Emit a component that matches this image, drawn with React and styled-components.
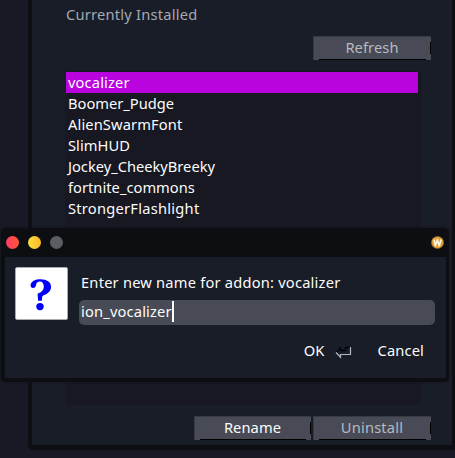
import React from "react";
import styled, { createGlobalStyle } from "styled-components";

const GlobalStyle = createGlobalStyle`
  * { box-sizing: border-box; }
  html, body { margin: 0; padding: 0; overflow: hidden; background: #171924; }
`;

const Desktop = styled.div`
  position: relative;
  width: 455px;
  height: 458px;
  padding-left: 28px;
  overflow: hidden;
  background: #171924;
  color: #fcfcfc;
  font: 14.67px/21px "Noto Sans", sans-serif;
  white-space: pre;
`;

const ManagerWindow = styled.main`
  display: flex;
  flex-direction: column;
  width: 429px;
  height: 450px;
  padding: 4px 21px 0 33px;
  background: #191d28;
  border: solid #0d0e12;
  border-width: 0 5px 5px 4px;
  border-radius: 0 0 5px 5px;
`;

const Heading = styled.h1`
  margin: 0 0 11px 1px;
  font-size: inherit;
  font-weight: 400;
  letter-spacing: 0.22px;
  color: #a5a9b3;
`;

const ButtonRow = styled.div`
  display: flex;
  justify-content: flex-end;
  gap: 2px;
`;

const PushButton = styled.button`
  position: relative;
  width: ${(p) => p.$width || 118}px;
  height: 24px;
  padding: 0 1px 3px 0;
  border: solid #373a43;
  border-width: 1px 0 0 1px;
  background: #484b55;
  color: ${(p) => (p.$muted ? "#b6b9c2" : "#fcfcfc")};
  font: inherit;
  line-height: 20px;
  letter-spacing: ${(p) => p.$tracking || 0}px;

  &::before {
    content: "";
    position: absolute;
    left: 5px;
    right: 5px;
    bottom: 0;
    height: 1px;
    background: #000;
  }
  &::after {
    content: "";
    position: absolute;
    right: 0;
    top: 5px;
    bottom: 6px;
    width: 1px;
    background: #000;
  }
`;

const AddonList = styled.ul`
  flex: none;
  width: 356px;
  height: 334px;
  margin: 11px 0;
  padding: 1px 3px 0 1px;
  list-style: none;
  border-radius: 3px;
  background: #171822;
`;

const AddonItem = styled.li`
  height: 21px;
  padding-left: 2px;
  line-height: 20px;
  letter-spacing: ${(p) => p.$tracking}px;
  background: ${(p) => (p.$selected ? "#b904e0" : "transparent")};
`;

const Dialog = styled.section`
  position: absolute;
  left: 1px;
  top: 228px;
  width: 448px;
  height: 154px;
  padding: 0 3px 4px 4px;
  border-radius: 5px;
  background: #0d0e12;
  box-shadow: 0 0 2px #101116;
`;

const TitleBar = styled.header`
  display: flex;
  align-items: center;
  gap: 9px;
  height: 29px;
  padding: 0 2px 0 1px;
`;

const WindowDot = styled.span`
  width: 13px;
  height: 13px;
  border-radius: 50%;
  background: ${(p) => p.$fill};
`;

const WineBadge = styled.svg`
  width: 13px;
  height: 13px;
  margin-left: auto;
`;

const DialogBody = styled.div`
  display: flex;
  gap: 11px;
  height: 121px;
  padding: 10px 10px 0;
  background: #191d28;
`;

const QuestionTile = styled.div`
  flex: none;
  width: 53px;
  height: 53px;
  border: 1px solid #a9abb0;
  border-radius: 2px;
  background: #fff;
`;

const Prompt = styled.div`
  flex: 1;
  min-width: 0;
`;

const PromptLabel = styled.label`
  display: block;
  height: 33px;
  padding: 5px 0 0 2px;
  letter-spacing: 0.21px;
`;

const NameField = styled.div`
  display: flex;
  align-items: flex-start;
  width: 356px;
  height: 25px;
  padding: 1px 2px 0;
  border-radius: 5px;
  background: #484b55;
  line-height: 20px;
  letter-spacing: 0.17px;
`;

const Caret = styled.span`
  width: 2px;
  height: 21px;
  background: #fff;
`;

const Actions = styled.footer`
  display: flex;
  align-items: center;
  justify-content: flex-end;
  height: 21px;
  margin: 15px 12px 0 0;
`;

const ActionButton = styled.button`
  padding: 0;
  border: 0;
  background: none;
  color: inherit;
  font: inherit;
  letter-spacing: 0.15px;
`;

const EnterIcon = styled.svg`
  width: 17px;
  height: 13px;
  margin: 3px 25px 0 11px;
`;

const addons = [
  { name: "vocalizer", tracking: 0.15 },
  { name: "Boomer_Pudge", tracking: 0 },
  { name: "AlienSwarmFont", tracking: 0.12 },
  { name: "SlimHUD", tracking: 0.05 },
  { name: "Jockey_CheekyBreeky", tracking: 0 },
  { name: "fortnite_commons", tracking: 0.03 },
  { name: "StrongerFlashlight", tracking: 0.25 },
];

export default function App() {
  return (
    <Desktop>
      <GlobalStyle />
      <ManagerWindow>
        <Heading>Currently Installed</Heading>
        <ButtonRow>
          <PushButton $muted $tracking={0.1}>Refresh</PushButton>
        </ButtonRow>
        <AddonList>
          {addons.map(({ name, tracking }, i) => (
            <AddonItem key={name} $selected={i === 0} $tracking={tracking}>{name}</AddonItem>
          ))}
        </AddonList>
        <ButtonRow>
          <PushButton $width={117} $tracking={0.1}>Rename</PushButton>
          <PushButton $muted $tracking={0.2}>Uninstall</PushButton>
        </ButtonRow>
      </ManagerWindow>
      <Dialog>
        <TitleBar>
          <WindowDot $fill="linear-gradient(90deg, #ff3b68, #ff5634)" />
          <WindowDot $fill="linear-gradient(90deg, #f9e13c, #fdb52c)" />
          <WindowDot $fill="#5c5d63" />
          <WineBadge viewBox="0 0 13 13">
            <circle cx="6.5" cy="6.5" r="6.1" fill="#dfa03a" stroke="#9b6d24" strokeWidth=".6" />
            <path d="M3 3.5 4.4 9.7 6.5 3.6 8.2 9.7 10.2 3.5" fill="none" stroke="#fff4dc" strokeWidth="1.6" strokeLinejoin="round" />
          </WineBadge>
        </TitleBar>
        <DialogBody>
          <QuestionTile>
            <svg width="51" height="51" viewBox="0 0 51 51">
              <path d="M14.7 16.2C15.7 13.1 19.4 11.2 24.5 11.2C30.9 11.2 35 14 35 18.7C35 22.9 32.2 25.6 27.2 27.5C26.3 27.9 26 28.9 25.9 32.8H22.1L21.6 25.7C25.8 24.1 27.8 22 27.8 18.5C27.8 15.4 26.4 13.4 23.9 13.4C21.9 13.4 20.4 14.5 20.2 16.2C20 18.6 18.9 19.9 17.1 19.9C15.3 19.9 14.1 18.4 14.7 16.2Z" fill="#0000f8" />
              <circle cx="24" cy="38.6" r="3.7" fill="#0000f8" />
            </svg>
          </QuestionTile>
          <Prompt>
            <PromptLabel>Enter new name for addon: vocalizer</PromptLabel>
            <NameField>ion_vocalizer<Caret /></NameField>
            <Actions>
              <ActionButton>OK</ActionButton>
              <EnterIcon viewBox="0 0 17 13">
                <path d="M5.5 1V4.5H10.5V1.5H16" fill="none" stroke="#030305" strokeWidth="1.4" />
                <path d="M1 6.5 5.5 2" fill="none" stroke="#08080b" strokeWidth="1.4" />
                <path d="M1 6.5 5.5 11.2V8.5H15.5V1" fill="none" stroke="#b5b5bb" strokeWidth="1.2" />
              </EnterIcon>
              <ActionButton>Cancel</ActionButton>
            </Actions>
          </Prompt>
        </DialogBody>
      </Dialog>
    </Desktop>
  );
}
